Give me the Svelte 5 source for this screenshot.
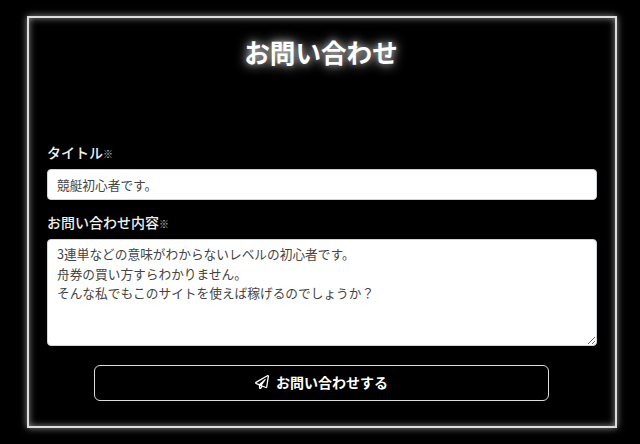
<script>
  let title = $state('競艇初心者です。');
  let body = $state('3連単などの意味がわからないレベルの初心者です。\n舟券の買い方すらわかりません。\nそんな私でもこのサイトを使えば稼げるのでしょうか？');
</script>

<div class="page">
  <form class="box" onsubmit={(e) => e.preventDefault()}>
    <h1>お問い合わせ</h1>
    <div class="fields">
      <label for="t">タイトル<small>※</small></label>
      <input id="t" type="text" bind:value={title} />
      <label for="b" class="second">お問い合わせ内容<small>※</small></label>
      <textarea id="b" bind:value={body}></textarea>
    </div>
    <button type="submit">
      <svg viewBox="0 0 512 512" width="14" height="14" aria-hidden="true"><path d="M440 6.500L24 246.400c-34.400 19.900-31.100 70.800 5.700 85.900L144 379.600V464c0 46.400 59.200 65.500 86.600 28.600l43.800-59.100 111.900 46.200c5.900 2.400 12.100 3.600 18.300 3.600 8.200 0 16.300-2.100 23.600-6.200 12.800-7.200 21.600-20 23.900-34.500l59.400-387.200c6.100-40.100-36.900-68.800-71.500-48.900zM192 464v-64.600l36.600 15.100L192 464zm212.600-28.700l-153.800-63.500L391 169.500c10.700-15.500-9.500-33.500-23.700-21.200L155.800 332.600 48 288 464 48l-59.400 387.300z" fill="#fff"/></svg>
      <span>お問い合わせする</span>
    </button>
  </form>
</div>

<style>
  :global(body) {
    margin: 0;
    background: #000;
  }
  .page {
    width: 640px;
    height: 444px;
    box-sizing: border-box;
    padding: 16px 23px 16px 27px;
    background: #000;
    overflow: hidden;
    font-family: "Noto Sans CJK JP", "Noto Sans", sans-serif;
  }
  .box {
    height: 412px;
    box-sizing: border-box;
    border: 2px solid #dcdcdc;
    box-shadow: 0 0 7px rgba(255, 255, 255, 0.55), inset 0 0 7px rgba(255, 255, 255, 0.55);
    padding: 0 18px;
    display: flex;
    flex-direction: column;
    align-items: stretch;
  }
  h1 {
    margin: 16px 0 0;
    padding-right: 2px;
    height: 36px;
    font-size: 25.6px;
    line-height: 36px;
    font-weight: 700;
    color: #fff;
    text-align: center;
    text-shadow: 0 0 12px rgba(255, 255, 255, 0.9), 0 0 6px rgba(255, 255, 255, 0.3);
  }
  .fields {
    margin-top: 38px;
    display: flex;
    flex-direction: column;
    padding-top: 34px;
  }
  label {
    color: #f0f0f0;
    font-size: 14px;
    line-height: 20px;
    font-weight: 500;
    height: 20px;
    margin-bottom: 7px;
  }
  label.second {
    margin-top: 12px;
  }
  small {
    font-size: 10px;
    color: #ccc;
    font-weight: 500;
  }
  input, textarea {
    display: block;
    width: 550px;
    box-sizing: border-box;
    border: 1px solid #ced4da;
    border-radius: 4px;
    background: #fff;
    color: #444;
    font-family: inherit;
    font-size: 12.7px;
    margin: 0;
    outline: none;
  }
  input {
    height: 31px;
    padding: 0 9px;
  }
  textarea {
    height: 107px;
    padding: 4px 9px;
    line-height: 19.5px;
    resize: vertical;
  }
  button {
    align-self: center;
    width: 455px;
    height: 36px;
    margin: 19px 1px 0 0;
    background: #000;
    border: 1px solid #ddd;
    border-radius: 6px;
    color: #fff;
    font-family: inherit;
    font-size: 14px;
    font-weight: 700;
    display: flex;
    align-items: center;
    justify-content: center;
    gap: 7px;
    padding: 0 0 2px;
  }
</style>
